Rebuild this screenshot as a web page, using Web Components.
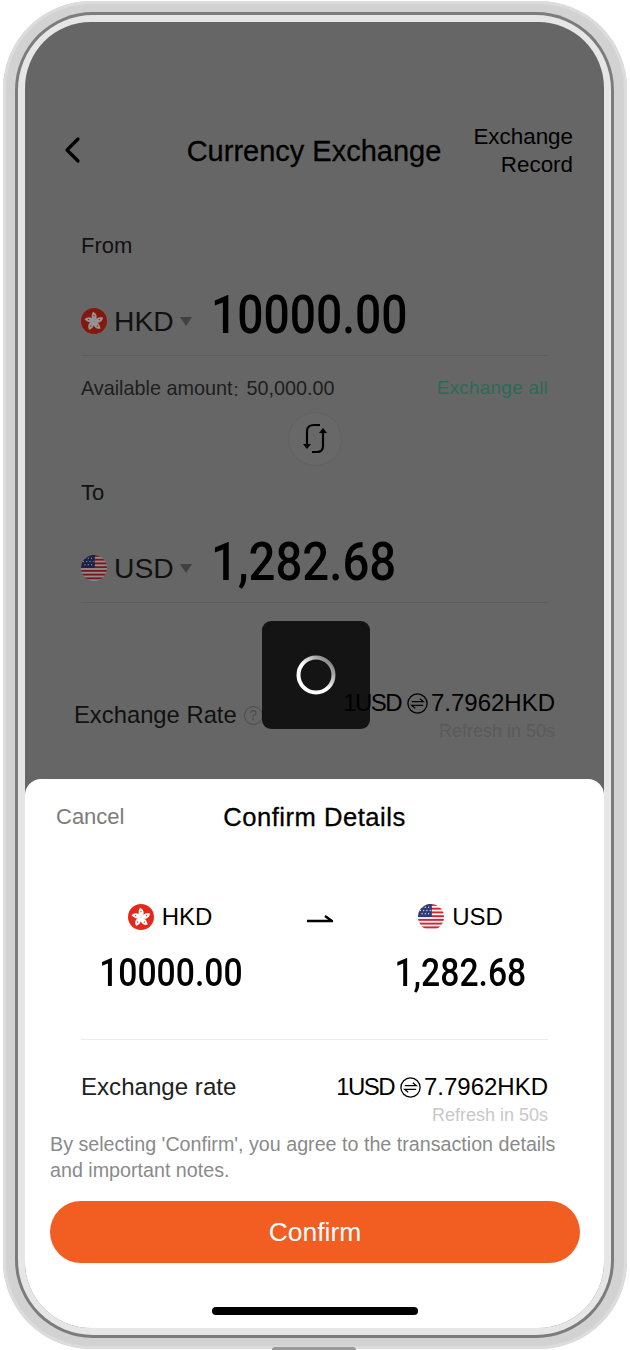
<!DOCTYPE html>
<html>
<head>
<meta charset="utf-8">
<style>
  html, body { margin: 0; background: #fff; }
  body { font-family: "Liberation Sans", Arial, sans-serif; color: #000; }
</style>
</head>
<body>
<phone-frame>
  <exchange-page></exchange-page>
  <confirm-sheet slot="over"></confirm-sheet>
  <loading-toast slot="over"></loading-toast>
</phone-frame>

<script>
const NUM_FONT = 'Roboto, "Liberation Sans", sans-serif';

class FlagIcon extends HTMLElement {
  connectedCallback() {
    const size = this.getAttribute('size') || 26;
    const root = this.attachShadow({ mode: 'open' });
    const petal = 'M0 0 C-3.2 -2.6 -4 -7.4 -1.2 -12 C2 -10.6 4 -7.2 3 -4 C2.4 -2.4 1.2 -1 0 0Z';
    const hk = `<circle cx="16" cy="16" r="16" fill="#e4291a"/>
      <g transform="translate(16 16.5)">
        ${[0, 72, 144, 216, 288].map(a => `<path d="${petal}" fill="#fff" transform="rotate(${a})"/>`).join('')}
        ${[0, 72, 144, 216, 288].map(a => `<circle cy="-7" r=".8" fill="#e4291a" transform="rotate(${a})"/>`).join('')}
      </g>`;
    let stripes = '';
    for (let i = 0; i < 7; i++) {
      stripes += `<rect x="0" y="${i * 4.6}" width="32" height="2.3" fill="#d8232f"/>`;
    }
    const us = `<clipPath id="c"><circle cx="16" cy="16" r="16"/></clipPath>
      <g clip-path="url(#c)">
        <rect width="32" height="32" fill="#f4f4f4"/>${stripes}
        <rect width="17" height="16" fill="#2b3c78"/>
        <g fill="#dfe3f2">
          <circle cx="5" cy="4" r=".8"/><circle cx="9" cy="4" r=".8"/><circle cx="13" cy="4" r=".8"/>
          <circle cx="3" cy="8" r=".8"/><circle cx="7" cy="8" r=".8"/><circle cx="11" cy="8" r=".8"/><circle cx="15" cy="8" r=".8"/>
          <circle cx="5" cy="12" r=".8"/><circle cx="9" cy="12" r=".8"/><circle cx="13" cy="12" r=".8"/>
        </g>
      </g>`;
    root.innerHTML = `
      <style>
        :host { display: inline-flex; width: ${size}px; height: ${size}px; flex: none; }
        :host([dim]) { filter: brightness(.58); }
        svg { width: 100%; height: 100%; display: block; }
      </style>
      <svg viewBox="0 0 32 32">${this.getAttribute('code') === 'us' ? us : hk}</svg>`;
  }
}

class RateIcon extends HTMLElement {
  connectedCallback() {
    this.attachShadow({ mode: 'open' }).innerHTML = `
      <style>
        :host { display: inline-flex; width: 21px; height: 21px; flex: none; }
        svg { width: 100%; height: 100%; }
      </style>
      <svg viewBox="0 0 21 21" fill="none" stroke="#000" stroke-width="1.3">
        <circle cx="10.5" cy="10.5" r="9.6"/>
        <path d="M4.8 8.6H16.2L12.8 5.8M16.2 12.4H4.8L8.2 15.2"/>
      </svg>`;
  }
}

class RateValue extends HTMLElement {
  connectedCallback() {
    const left = this.getAttribute('left');
    const right = this.getAttribute('right');
    this.attachShadow({ mode: 'open' }).innerHTML = `
      <style>
        :host { display: flex; flex-direction: column; align-items: flex-end; }
        .val { display: flex; align-items: center; font-size: 24px; line-height: 28px; color: #000; }
        .val .l { letter-spacing: -1.6px; }
        .val rate-icon { margin: 0 3px 0 6px; }
        .sub { font-size: 18px; line-height: 20px; margin-top: 4px; color: var(--sub, #c8c8c8); }
      </style>
      <div class="val"><span class="l">${left}</span><rate-icon></rate-icon><span>${right}</span></div>
      <div class="sub">Refresh in 50s</div>`;
  }
}

class AmountField extends HTMLElement {
  connectedCallback() {
    const squeeze = this.getAttribute('squeeze') || '.86';
    this.attachShadow({ mode: 'open' }).innerHTML = `
      <style>
        :host { display: block; margin: 0 56px; }
        .label { font-size: 22px; line-height: 26px; color: #111; }
        .row {
          display: flex; align-items: center; height: 72px; margin-top: 25px;
          border-bottom: 1px solid #5c5c5c; box-sizing: border-box;
        }
        .cur { display: flex; align-items: center; width: 130px; font-size: 28.3px; line-height: 32px; color: #111; padding-top: 2px; }
        .cur span { margin-left: 7px; }
        .tri {
          width: 0; height: 0; margin: 2px 0 0 6px;
          border-left: 6.5px solid transparent; border-right: 6.5px solid transparent;
          border-top: 9px solid #414141;
        }
        .amount {
          font-family: ${NUM_FONT}; font-weight: 500; font-size: 54px; line-height: 60px;
          color: #000; transform: translateY(-5px) scaleX(${squeeze}); transform-origin: left center; white-space: nowrap;
        }
      </style>
      <div class="label">${this.getAttribute('label')}</div>
      <div class="row">
        <div class="cur">
          <flag-icon dim code="${this.getAttribute('flag')}"></flag-icon>
          <span>${this.getAttribute('cur')}</span><i class="tri"></i>
        </div>
        <div class="amount">${this.getAttribute('amount')}</div>
      </div>`;
  }
}

class ExchangePage extends HTMLElement {
  connectedCallback() {
    this.attachShadow({ mode: 'open' }).innerHTML = `
      <style>
        :host { display: block; height: 100%; background: #666; padding-top: 100px; box-sizing: border-box; }
        .head {
          display: grid; grid-template-columns: 1fr auto 1fr; align-items: center;
          padding: 0 31px 0 30px; height: 58px;
        }
        .head svg { width: 20px; height: 28px; display: block; margin: -2px 0 0 8px; }
        .title { font-size: 29px; -webkit-text-stroke: .3px #000; }
        .record { font-size: 22.4px; line-height: 28px; text-align: right; justify-self: end; width: 102px; }
        .avail {
          display: flex; justify-content: space-between; margin: 20px 56px 0;
          font-size: 19.8px; line-height: 24px; color: #1e1e1e;
        }
        .avail .colon { font-family: "Noto Sans CJK SC", sans-serif; font-size: 14px; line-height: 0; }
        .avail b { font-weight: normal; font-size: 19px; color: #2c6a58; letter-spacing: .2px; }
        .swap {
          width: 52px; height: 52px; border: 1px solid #626262; border-radius: 50%; background: #686868; margin: 12px auto 0;
          display: flex; align-items: center; justify-content: center;
        }
        .swap svg { width: 28px; height: 34px; }
        .rate {
          display: flex; justify-content: space-between; align-items: flex-start;
          margin: 86px 49px 0 49px; --sub: #5a5a5a;
        }
        .rate .name { display: flex; align-items: center; font-size: 23.8px; line-height: 28px; margin-top: 12px; color: #111; }
        .q {
          width: 19px; height: 19px; margin-left: 7px; border: 1.5px solid #4c4c4c; border-radius: 50%;
          box-sizing: border-box; color: #4c4c4c; font-size: 14px; line-height: 16px; text-align: center;
        }
      </style>
      <div class="head">
        <svg viewBox="0 0 20 28" fill="none" stroke="#000" stroke-width="3.2" stroke-linecap="round" stroke-linejoin="round">
          <path d="M15 3 L4 14 L15 25"/>
        </svg>
        <div class="title">Currency Exchange</div>
        <div class="record">Exchange Record</div>
      </div>
      <amount-field style="margin-top:53px" label="From" flag="hk" cur="HKD" amount="10000.00" squeeze=".855"></amount-field>
      <div class="avail"><span>Available amount<span class="colon">：</span>50,000.00</span><b>Exchange all</b></div>
      <div class="swap">
        <svg viewBox="0 0 28 34" fill="none" stroke="#000" stroke-width="2.2">
          <path d="M19 3 H13 C8.5 3 6 5.5 6 9 V22"/>
          <path d="M11 30 H16 C20 30 22 28 22 24 V10"/>
          <path d="M2 22 H10 L6 27Z" fill="#000" stroke="none"/>
          <path d="M18 11 H26 L22 6Z" fill="#000" stroke="none"/>
        </svg>
      </div>
      <amount-field style="margin-top:14px" label="To" flag="us" cur="USD" amount="1,282.68" squeeze=".877"></amount-field>
      <div class="rate">
        <div class="name">Exchange Rate<span class="q">?</span></div>
        <rate-value left="1USD" right="7.7962HKD"></rate-value>
      </div>`;
  }
}

class ConfirmSheet extends HTMLElement {
  connectedCallback() {
    this.attachShadow({ mode: 'open' }).innerHTML = `
      <style>
        :host {
          position: absolute; left: 0; right: 0; bottom: 0; height: 549px;
          background: #fff; border-radius: 16px 16px 0 0; box-sizing: border-box; padding-top: 22px;
        }
        .top { display: grid; grid-template-columns: 1fr auto 1fr; align-items: center; padding: 0 31px; height: 32px; }
        .cancel { font-size: 22px; color: #7c7c7c; }
        .title { font-size: 25.6px; letter-spacing: .5px; -webkit-text-stroke: .3px #000; }
        .pair { display: grid; grid-template-columns: 292px 0 1fr; margin-top: 70px; }
        .side { display: flex; flex-direction: column; align-items: center; }
        .side:first-child .cur { margin-right: 2px; }
        .cur { display: flex; align-items: center; gap: 8px; font-size: 24px; line-height: 28px; }
        .amount {
          font-family: ${NUM_FONT}; font-weight: 500; font-size: 38px; line-height: 44px; margin-top: 20px;
          transform: scaleX(.887); white-space: nowrap;
        }
        .arrow { width: 26px; height: 10px; margin: 10px 0 0 -10px; display: block; }
        hr { border: 0; border-top: 1px solid #ececec; margin: 44px 56px 0; }
        .rate { display: flex; justify-content: space-between; margin: 33px 56px 0; }
        .rate .name { font-size: 24.1px; line-height: 28px; color: #222; }
        .note { margin: 6px 24px 0 25px; font-size: 19.7px; line-height: 26px; color: #8a8a8a; }
        .btn {
          height: 62px; margin: 18px 24px 0 25px; border-radius: 31px; background: #f25d22; color: #fff;
          display: flex; align-items: center; justify-content: center; font-size: 26.4px;
        }
        .bar { position: absolute; left: 187px; bottom: 13px; width: 206px; height: 8px; border-radius: 4px; background: #000; }
      </style>
      <div class="top"><div class="cancel">Cancel</div><div class="title">Confirm Details</div><div></div></div>
      <div class="pair">
        <div class="side">
          <div class="cur"><flag-icon code="hk"></flag-icon>HKD</div>
          <div class="amount">10000.00</div>
        </div>
        <div>
          <svg class="arrow" viewBox="0 0 26 10" fill="none" stroke="#000" stroke-width="2.4">
            <path d="M0 8H25L18 3"/>
          </svg>
        </div>
        <div class="side">
          <div class="cur"><flag-icon code="us"></flag-icon>USD</div>
          <div class="amount">1,282.68</div>
        </div>
      </div>
      <hr>
      <div class="rate">
        <div class="name">Exchange rate</div>
        <rate-value left="1USD" right="7.7962HKD"></rate-value>
      </div>
      <div class="note">By selecting 'Confirm', you agree to the transaction details and important notes.</div>
      <div class="btn">Confirm</div>
      <div class="bar"></div>`;
  }
}

class LoadingToast extends HTMLElement {
  connectedCallback() {
    this.attachShadow({ mode: 'open' }).innerHTML = `
      <style>
        :host {
          position: absolute; left: 237px; top: 599px; width: 108px; height: 108px;
          background: rgba(0,0,0,.8); border-radius: 9px; display: flex; align-items: center; justify-content: center;
        }
        svg { width: 40px; height: 40px; display: block; }
      </style>
      <svg viewBox="0 0 40 40" fill="none" stroke-width="4">
        <defs>
          <linearGradient id="g" x1="1" y1="0" x2="0" y2="1">
            <stop offset="0" stop-color="#666"/><stop offset=".55" stop-color="#fff"/>
          </linearGradient>
        </defs>
        <circle cx="20" cy="20" r="17.5" stroke="url(#g)"/>
      </svg>`;
  }
}

class PhoneFrame extends HTMLElement {
  connectedCallback() {
    this.attachShadow({ mode: 'open' }).innerHTML = `
      <style>
        :host { display: block; width: 630px; height: 1350px; padding: 1px 3px; box-sizing: border-box; position: relative; }
        .outer {
          height: 100%; box-sizing: border-box; padding: 11px 13px 11px 12px; border-radius: 88px;
          background: #d2d2d2; box-shadow: inset 0 0 0 3px #dcdcdc;
        }
        .line { height: 100%; box-sizing: border-box; padding: 3px; border-radius: 78px; background: #7c7c7c; }
        .rim { height: 100%; box-sizing: border-box; padding: 7px; border-radius: 75px; background: #e6e6e6; }
        .screen { height: 100%; position: relative; overflow: hidden; border-radius: 66px; background: #fff; }
        .nub { position: absolute; left: 272px; bottom: 0; width: 84px; height: 3px; border-radius: 3px 3px 0 0; background: #9a9a9a; }
      </style>
      <div class="outer"><div class="line"><div class="rim"><div class="screen">
        <slot></slot>
        <slot name="over"></slot>
      </div></div></div></div>
      <div class="nub"></div>`;
  }
}

customElements.define('flag-icon', FlagIcon);
customElements.define('rate-icon', RateIcon);
customElements.define('rate-value', RateValue);
customElements.define('amount-field', AmountField);
customElements.define('exchange-page', ExchangePage);
customElements.define('confirm-sheet', ConfirmSheet);
customElements.define('loading-toast', LoadingToast);
customElements.define('phone-frame', PhoneFrame);
</script>
</body>
</html>
